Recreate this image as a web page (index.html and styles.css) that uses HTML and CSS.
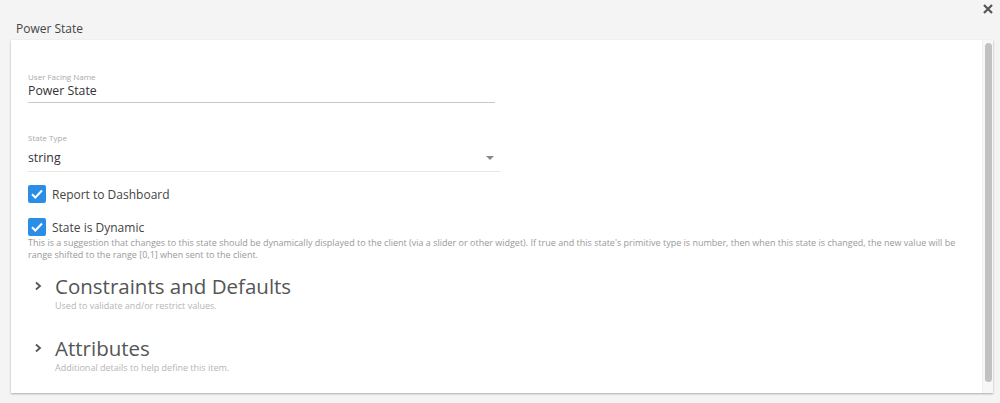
FILE: index.html
```html
<!DOCTYPE html>
<html>
<head>
<meta charset="utf-8">
<link rel="stylesheet" href="styles.css">
</head>
<body>
<div class="page">
  <div class="header">
    <div class="title">Power State</div>
    <div class="close"><svg viewBox="0 0 10 10" width="10" height="10"><path d="M1 1l8 8M9 1l-8 8" stroke="#555" stroke-width="2.2" fill="none"/></svg></div>
  </div>
  <div class="card">
    <div class="content">
      <div class="field name-field">
        <div class="label">User Facing Name</div>
        <div class="value">Power State</div>
      </div>
      <div class="field type-field">
        <div class="label">State Type</div>
        <div class="value select">string<span class="caret"></span></div>
      </div>
      <div class="check first">
        <span class="box"><svg viewBox="0 0 18 18" width="18" height="18"><path d="M4 9.2l3.3 3.3 6.7-7" fill="none" stroke="#fff" stroke-width="2"/></svg></span>
        <span class="check-label">Report to Dashboard</span>
      </div>
      <div class="check second">
        <span class="box"><svg viewBox="0 0 18 18" width="18" height="18"><path d="M4 9.2l3.3 3.3 6.7-7" fill="none" stroke="#fff" stroke-width="2"/></svg></span>
        <span class="check-label">State is Dynamic</span>
      </div>
      <div class="desc">This is a suggestion that changes to this state should be dynamically displayed to the client (via a slider or other widget). If true and this state's primitive type is number, then when this state is changed, the new value will be range shifted to the range [0,1] when sent to the client.</div>
      <div class="section constraints">
        <div class="section-head"><span class="chev"><svg viewBox="0 0 10 10" width="10" height="10"><path d="M3 1.5l4 3.5-4 3.5" fill="none" stroke="#555" stroke-width="1.8"/></svg></span><span class="section-title">Constraints and Defaults</span></div>
        <div class="section-sub">Used to validate and/or restrict values.</div>
      </div>
      <div class="section attributes">
        <div class="section-head"><span class="chev"><svg viewBox="0 0 10 10" width="10" height="10"><path d="M3 1.5l4 3.5-4 3.5" fill="none" stroke="#555" stroke-width="1.8"/></svg></span><span class="section-title">Attributes</span></div>
        <div class="section-sub">Additional details to help define this item.</div>
      </div>
    </div>
    <div class="scrollbar"><div class="thumb"></div></div>
  </div>
</div>
</body>
</html>
```
FILE: styles.css
```css
html, body {
  margin: 0;
  padding: 0;
  background: #f4f4f4;
  font-family: "Open Sans", "Liberation Sans", sans-serif;
  color: #333;
}
.page {
  width: 1000px;
  height: 403px;
  overflow: hidden;
}
.header {
  height: 40px;
  display: flex;
  justify-content: space-between;
  padding: 0 7px 0 16px;
  box-sizing: border-box;
}
.title {
  align-self: flex-end;
  font-size: 12px;
  line-height: 16px;
  padding-bottom: 3px;
  color: #444;
}
.close {
  padding-top: 4px;
}
.close svg { display: block; }
.card {
  margin: 0 7px 0 11px;
  height: 353px;
  background: #fff;
  box-shadow: 0 1px 2px rgba(0,0,0,0.3);
  display: flex;
}
.content {
  flex: 1;
  padding: 0 0 0 17px;
}
.scrollbar {
  width: 11px;
  background: #f7f7f7;
  border-left: 1px solid #f0f0f0;
  padding: 3px 0 0 2px;
  box-sizing: border-box;
}
.thumb {
  width: 7px;
  height: 339px;
  background: #c1c1c1;
  border-radius: 4px;
}
.field {
  border-bottom: 1px solid #c8c8c8;
}
.name-field {
  width: 467px;
  margin-top: 32px;
}
.type-field {
  width: 472px;
  margin-top: 30px;
  border-bottom-color: #e6e6e6;
}
.label {
  font-size: 8px;
  line-height: 10px;
  color: #aaa;
}
.value {
  font-size: 12.3px;
  line-height: 18px;
  color: #333;
  padding-bottom: 2px;
}
.type-field .label { margin-bottom: 4px; }
.type-field .value { padding-top: 2px; padding-bottom: 4px; }
.select {
  display: flex;
  justify-content: space-between;
  align-items: center;
}
.caret {
  width: 0;
  height: 0;
  border-left: 4px solid transparent;
  border-right: 4px solid transparent;
  border-top: 4px solid #888;
  margin-right: 6px;
}
.check {
  display: flex;
  align-items: center;
  height: 18px;
}
.check.first { margin-top: 13px; }
.check.second { margin-top: 15px; }
.box {
  width: 18px;
  height: 18px;
  background: #2b8ee6;
  border-radius: 2px;
  display: block;
}
.box svg { display: block; }
.check-label {
  margin-left: 6px;
  font-size: 12px;
  color: #444;
}
.desc {
  font-size: 9px;
  line-height: 12px;
  color: #999;
  margin-top: 1px;
  padding-right: 10px;
}
.section-head {
  display: flex;
  align-items: center;
  height: 28px;
}
.chev {
  width: 10px;
  height: 10px;
  margin-left: 5px;
  margin-right: 12px;
}
.chev svg { display: block; }
.section-title {
  font-size: 20.5px;
  color: #555;
}
.section-sub {
  font-size: 9px;
  line-height: 12px;
  color: #b5b5b5;
  margin-left: 27px;
  margin-top: 0;
}
.constraints { margin-top: 11px; }
.attributes { margin-top: 22px; }
```
